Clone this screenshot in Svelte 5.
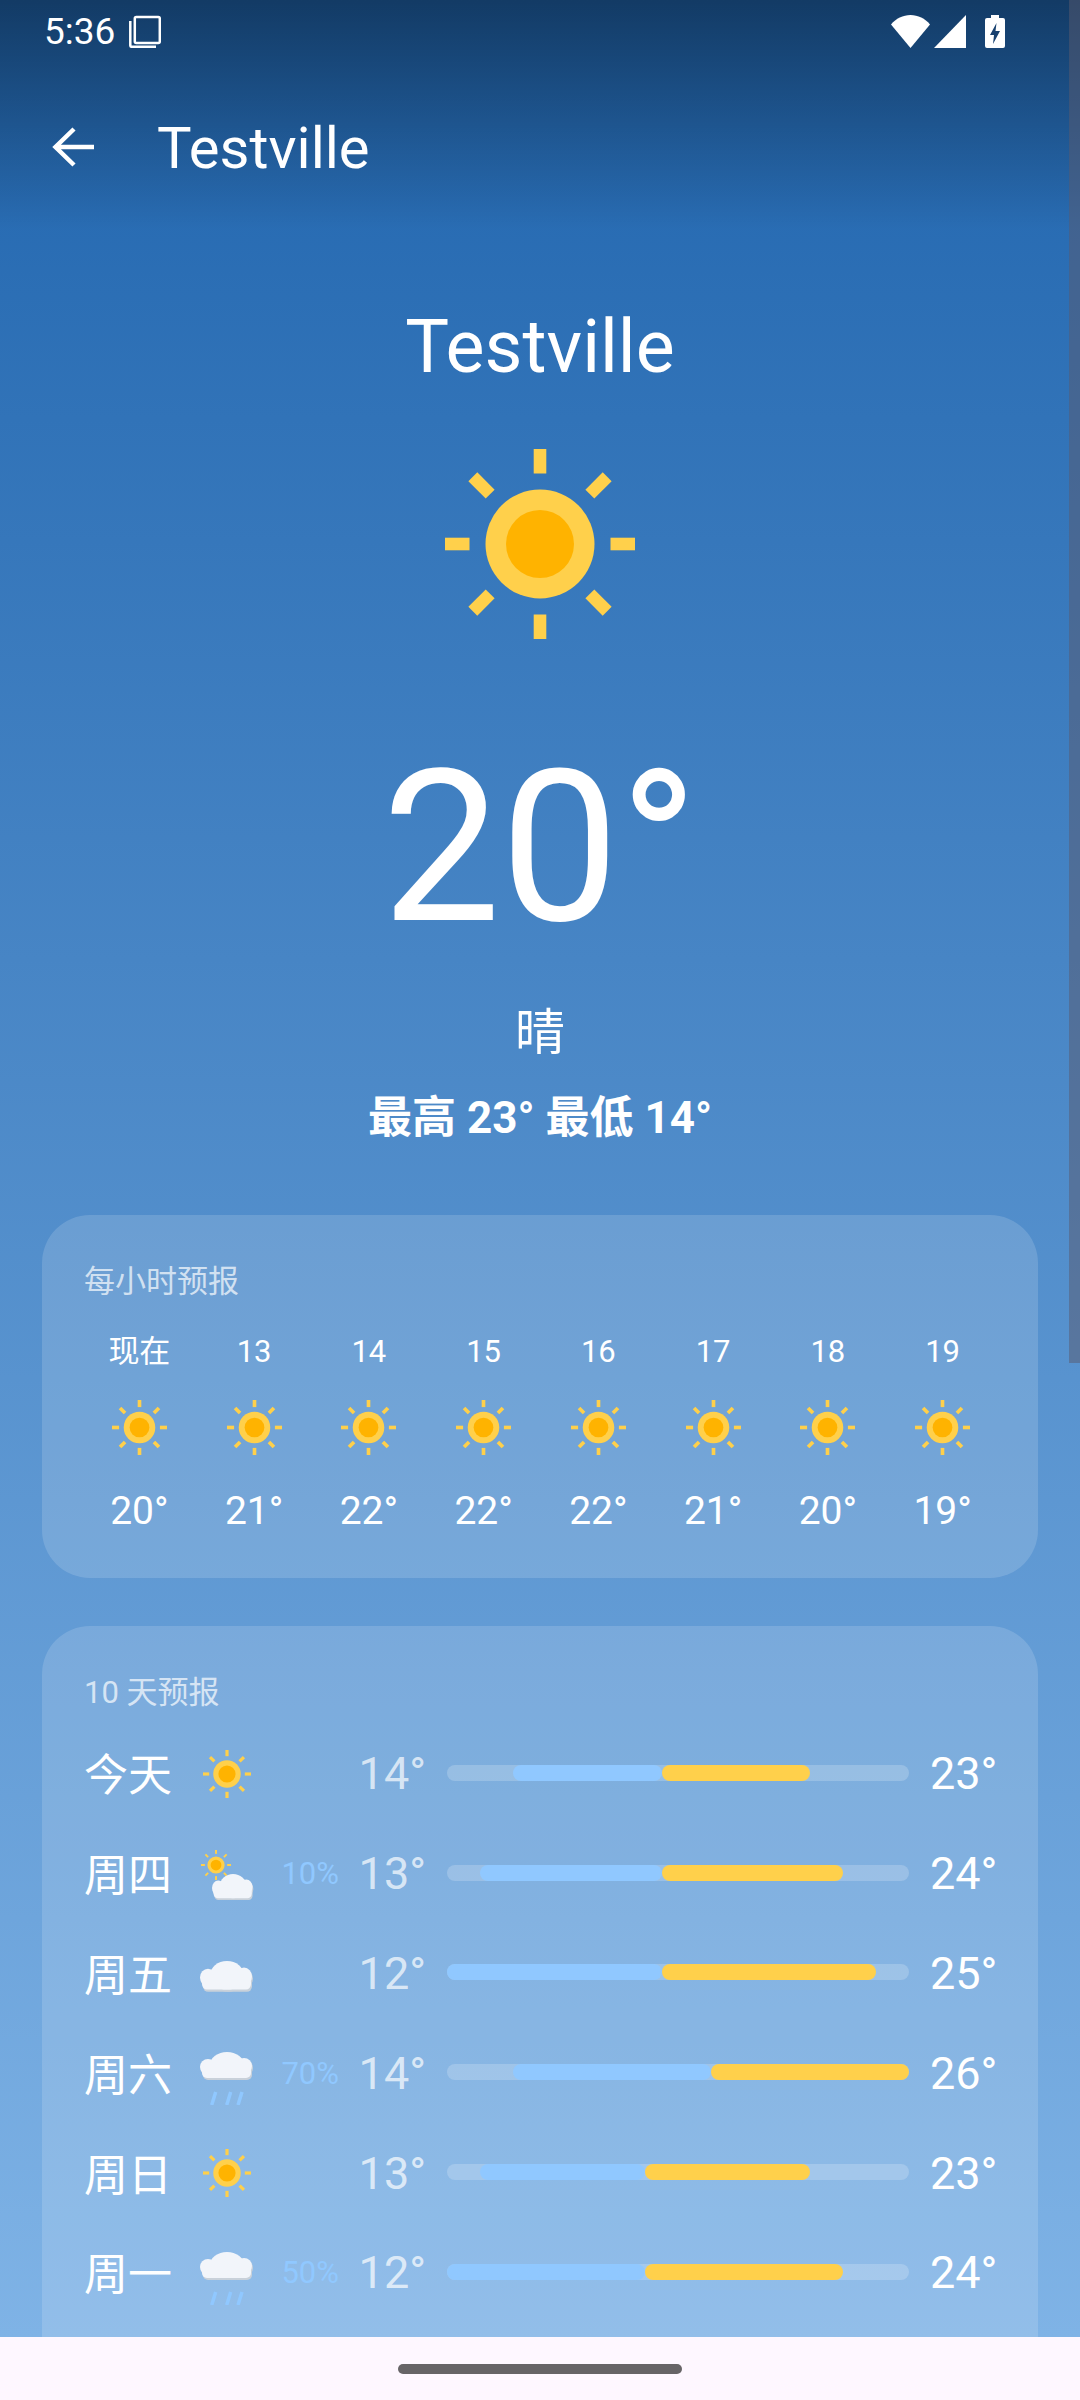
<script>
	const hours = [
		{ label: '现在', temp: 20 },
		{ label: '13', temp: 21 },
		{ label: '14', temp: 22 },
		{ label: '15', temp: 22 },
		{ label: '16', temp: 22 },
		{ label: '17', temp: 21 },
		{ label: '18', temp: 20 },
		{ label: '19', temp: 19 }
	];

	const days = [
		{ name: '今天', icon: 'sun', pct: '', low: 14, high: 23 },
		{ name: '周四', icon: 'partly', pct: '10%', low: 13, high: 24 },
		{ name: '周五', icon: 'cloud', pct: '', low: 12, high: 25 },
		{ name: '周六', icon: 'rain', pct: '70%', low: 14, high: 26 },
		{ name: '周日', icon: 'sun', pct: '', low: 13, high: 23 },
		{ name: '周一', icon: 'rain', pct: '50%', low: 12, high: 24 }
	];

	// week range, the bars are scaled on it
	const minT = 12;
	const maxT = 26;
	const pos = (t) => ((t - minT) / (maxT - minT)) * 100;
	const rays = [0, 45, 90, 135, 180, 225, 270, 315];
</script>

{#snippet sunRays()}
	{#each rays as r}
		<rect x="88.7" y="0" width="12.6" height="24.5" fill="#ffd04b" transform="rotate({r} 95 95)" />
	{/each}
	<circle cx="95" cy="95" r="54.5" fill="#ffd04b" />
	<circle cx="95" cy="95" r="34" fill="#ffb300" />
{/snippet}

{#snippet puff(fill)}
	<g {fill}>
		<circle cx="8" cy="15" r="8" />
		<ellipse cx="27" cy="13" rx="17" ry="13" />
		<circle cx="44" cy="14" r="8" />
		<rect x="2" y="14" width="49" height="12" rx="5" />
	</g>
{/snippet}

{#snippet cloud(transform)}
	<g {transform}>
		<g transform="translate(1 2)">{@render puff('#c9d1da')}</g>
		{@render puff('#f2f5fa')}
	</g>
{/snippet}

{#snippet dayIcon(kind)}
	<svg class="day-icon" viewBox="0 0 54 64">
		{#if kind === 'sun'}
			<g transform="translate(3 8) scale(0.2526)">{@render sunRays()}</g>
		{:else if kind === 'partly'}
			<g transform="translate(1 8) scale(0.158)">{@render sunRays()}</g>
			{@render cloud('translate(12 32) scale(0.78 0.93)')}
		{:else if kind === 'cloud'}
			{@render cloud('translate(0 20) scale(1 1.1)')}
		{:else}
			{@render cloud('translate(0 11)')}
			<path d="M15.700 51l-4 13M30.700 51l-4 13M42 51l-4 13" stroke="#90c8ff" stroke-width="3.500" fill="none" />
		{/if}
	</svg>
{/snippet}

<div class="screen">
	<div class="scroll-thumb"></div>

	<div class="status">
		<span class="time">5:36</span>
		<svg class="copy" viewBox="0 0 32 33" fill="none" stroke="#fff" stroke-width="2.500">
			<rect x="5.800" y="2" width="25" height="26" rx="1.500" />
			<path d="M1.300 6v24.500c0 .8.5 1.300 1.300 1.300H27" />
		</svg>
		<span class="grow"></span>
		<svg class="wifi" viewBox="0 0 40 33"><path d="M19.500 33L0 9.500C5 3.500 12 0 19.500 0S34 3.500 39 9.500z" fill="#fff" /></svg>
		<svg class="signal" viewBox="0 0 32 33"><path d="M32 0v33H0z" fill="#fff" /></svg>
		<svg class="battery" viewBox="0 0 20 33">
			<path d="M6 0h8v3h4a2 2 0 0 1 2 2v26a2 2 0 0 1-2 2H2a2 2 0 0 1-2-2V5a2 2 0 0 1 2-2h4z" fill="#fff" />
			<path d="M11.500 8L5 20h4l-1 9 7-13h-4.500z" fill="#17406f" />
		</svg>
	</div>

	<div class="appbar">
		<svg class="back" viewBox="0 0 42 42" fill="none" stroke="#fff" stroke-width="4.500">
			<path d="M42 21H3.500M22 3L3.500 21 22 39" />
		</svg>
		<span class="appbar-title">Testville</span>
	</div>

	<div class="hero">
		<div class="city">Testville</div>
		<svg class="hero-sun" viewBox="0 0 190 190">{@render sunRays()}</svg>
		<div class="now">20°</div>
		<div class="cond">晴</div>
		<div class="hilo">最高 23° 最低 14°</div>
	</div>

	<section class="card hourly">
		<div class="card-title">每小时预报</div>
		<div class="hour-grid">
			{#each hours as h}
				<div class="hour">
					<span class="hour-label">{h.label}</span>
					<svg class="hour-sun" viewBox="0 0 190 190">{@render sunRays()}</svg>
					<span class="hour-temp">{h.temp}°</span>
				</div>
			{/each}
		</div>
	</section>

	<section class="card daily">
		<div class="card-title">10 天预报</div>
		{#each days as d}
			{@const mid = (d.low + d.high) / 2}
			<div class="day">
				<span class="day-name">{d.name}</span>
				{@render dayIcon(d.icon)}
				<span class="pct">{d.pct}</span>
				<span class="low">{d.low}°</span>
				<div class="track">
					<div class="cold" style="margin-left:{pos(d.low)}%;width:{pos(mid) - pos(d.low)}%"></div>
					<div class="warm" style="width:{pos(d.high) - pos(mid)}%"></div>
				</div>
				<span class="high">{d.high}°</span>
			</div>
		{/each}
	</section>

	<div class="navbar"><div class="pill"></div></div>
</div>

<style>
	:global(body) {
		margin: 0;
	}

	.screen {
		position: relative;
		width: 1080px;
		height: 2400px;
		overflow: hidden;
		box-sizing: border-box;
		color: #fff;
		font-family: Roboto, 'Noto Sans CJK SC', sans-serif;
		background:
			linear-gradient(180deg, rgba(0, 0, 0, 0.42) 0, rgba(0, 0, 0, 0) 230px),
			linear-gradient(180deg, #2065ae 0, #7fb3e6 2337px);
		padding-bottom: 64px;
		display: flex;
		flex-direction: column;
	}

	.scroll-thumb {
		position: absolute;
		top: 0;
		right: 0;
		width: 11px;
		height: 1363px;
		background: rgba(90, 90, 110, 0.5);
	}

	.status {
		height: 63px;
		padding: 0 75px 0 44px;
		display: flex;
		align-items: center;
		flex: none;
	}

	.time {
		font-size: 37px;
		line-height: 1;
		margin-right: 14px;
	}

	.copy {
		width: 32px;
		height: 33px;
	}

	.grow {
		flex: 1;
	}

	.wifi {
		width: 40px;
		height: 33px;
	}

	.signal {
		width: 32px;
		height: 33px;
		margin: 0 19px 0 3px;
	}

	.battery {
		width: 20px;
		height: 33px;
	}

	.appbar {
		height: 168px;
		display: flex;
		align-items: center;
		padding-left: 52px;
		flex: none;
	}

	.back {
		width: 42px;
		height: 42px;
		margin-right: 63px;
	}

	.appbar-title {
		font-size: 58px;
		line-height: 1;
		padding-top: 2px;
	}

	.hero {
		display: flex;
		flex-direction: column;
		align-items: center;
		flex: none;
		height: 984px;
	}

	.city {
		margin-top: 70px;
		font-size: 73.500px;
		line-height: 92px;
	}

	.hero-sun {
		width: 190px;
		height: 190px;
		margin-top: 56px;
	}

	.now {
		font-size: 211px;
		font-weight: 400;
		line-height: 260px;
		margin-top: 79px;
	}

	.cond {
		font-size: 50px;
		line-height: 70px;
		margin-top: 20px;
	}

	.hilo {
		font-size: 44px;
		font-weight: 700;
		line-height: 56px;
		margin-top: 22px;
	}

	.card {
		margin: 0 42px;
		background: rgba(255, 255, 255, 0.15);
		border-radius: 48px;
		flex: none;
	}

	.card-title {
		font-size: 31px;
		line-height: 40px;
		color: rgba(255, 255, 255, 0.7);
	}

	.hourly {
		height: 363px;
		padding-top: 47px;
		box-sizing: border-box;
	}

	.hourly .card-title {
		padding-left: 42px;
	}

	.hour-grid {
		display: grid;
		grid-template-columns: repeat(8, 1fr);
		padding: 0 38px 0 40px;
		margin-top: 30px;
	}

	.hour {
		display: flex;
		flex-direction: column;
		align-items: center;
	}

	.hour-label {
		font-size: 31px;
		line-height: 40px;
	}

	.hour-sun {
		width: 55px;
		height: 55px;
		margin-top: 28px;
	}

	.hour-temp {
		font-size: 39px;
		line-height: 50px;
		margin-top: 31px;
	}

	.daily {
		margin-top: 48px;
		height: 760px;
		padding: 47px 0 0 42px;
		box-sizing: border-box;
	}

	.daily .card-title {
		margin-bottom: 11px;
	}

	.day {
		height: 99.800px;
		display: flex;
		align-items: center;
	}

	.day-name {
		width: 116px;
		font-size: 44px;
		line-height: 1;
		padding-top: 5px;
		flex: none;
	}

	.day-icon {
		width: 54px;
		height: 64px;
		flex: none;
	}

	.pct {
		width: 85px;
		text-align: right;
		font-size: 31px;
		color: #90c8ff;
		flex: none;
	}

	.low {
		width: 87px;
		text-align: right;
		font-size: 45px;
		color: rgba(255, 255, 255, 0.7);
		flex: none;
	}

	.track {
		width: 462px;
		height: 16px;
		margin: -2px 21px 0 21px;
		border-radius: 8px;
		background: rgba(255, 255, 255, 0.2);
		display: flex;
		flex: none;
	}

	.cold {
		background: #90c8ff;
		border-radius: 8px;
	}

	.warm {
		background: #ffd04b;
		border-radius: 8px;
	}

	.high {
		font-size: 45px;
	}

	.navbar {
		position: absolute;
		left: 0;
		right: 0;
		bottom: 0;
		height: 63px;
		background: #fef7ff;
		display: flex;
		justify-content: center;
		padding-top: 27px;
		box-sizing: border-box;
	}

	.pill {
		width: 284px;
		height: 10px;
		border-radius: 5px;
		background: #676467;
	}
</style>
